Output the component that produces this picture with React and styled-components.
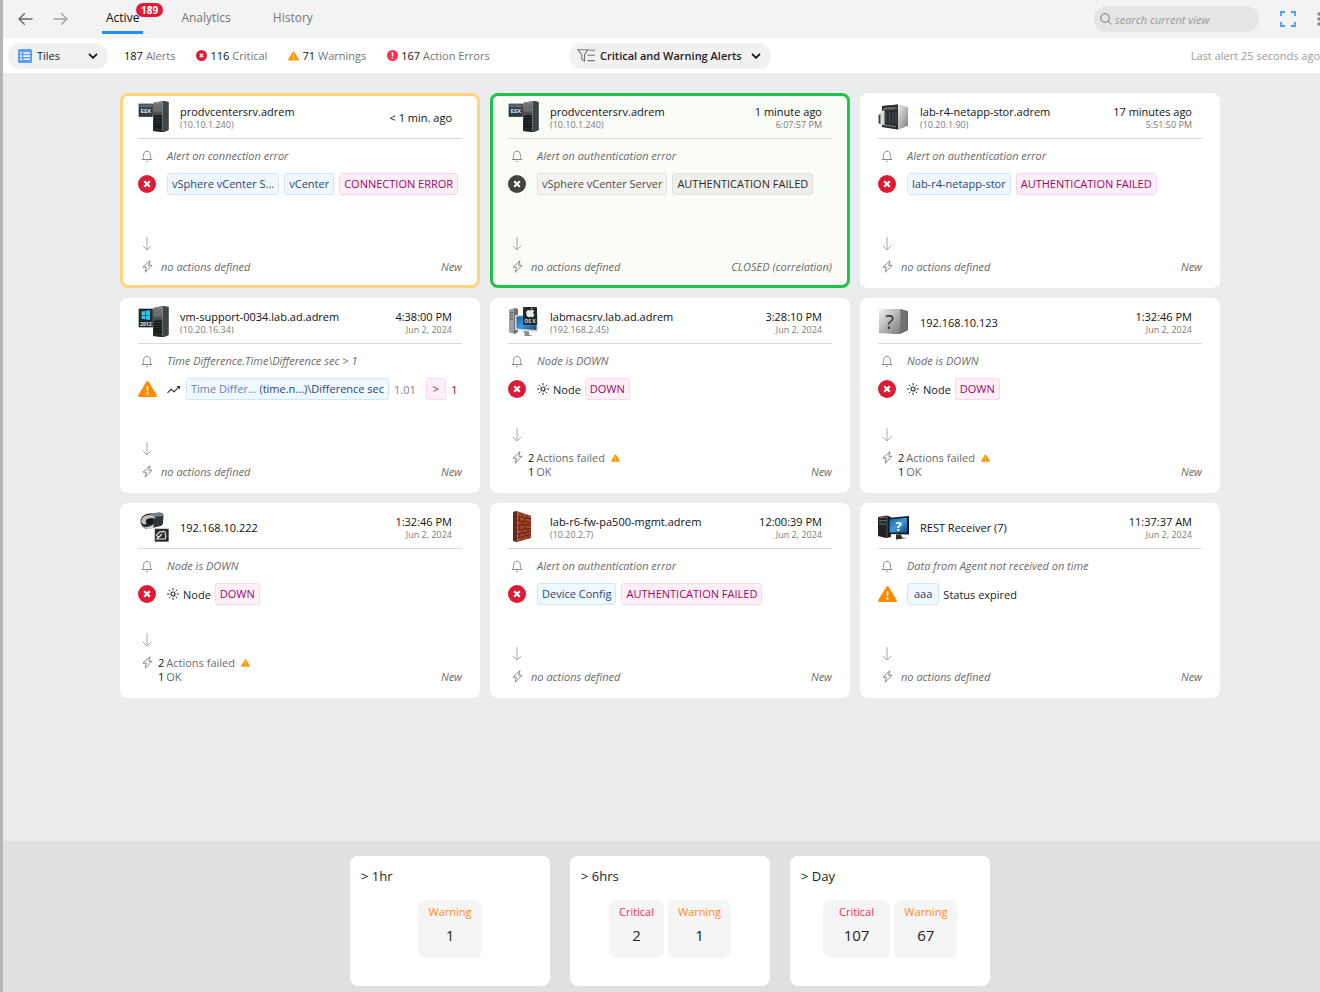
import React from "react";
import styled, { createGlobalStyle } from "styled-components";

const GlobalStyle = createGlobalStyle`
  * {
    box-sizing: border-box;
  }

  body {
    margin: 0;
    overflow: hidden auto;
    background: #ebecee;
    font-family: "Open Sans", "Noto Sans", sans-serif;
    font-size: 11px;
    color: #222;
  }

  button, input, select {
    font: inherit;
    color: inherit;
    border: 0;
    padding: 0;
    margin: 0;
    background: none;
    outline: none;
  }

  svg {
    display: block;
    flex: none;
  }

  h2, h3, p {
    margin: 0;
    font-size: inherit;
    font-weight: inherit;
  }
`;

const esx = { name: "prodvcentersrv.adrem", ip: "(10.10.1.240)", device: "esx" };
const noActions = { failed: 0 };
const failedActions = { failed: 2, ok: 1 };

const alerts = [
  {
    ...esx,
    time: "< 1 min. ago",
    rule: "Alert on connection error",
    level: "critical",
    parts: [
      { chip: "blue", text: "vSphere vCenter S..." },
      { chip: "blue", text: "vCenter" },
      { chip: "pink", text: "CONNECTION ERROR" }
    ],
    actions: noActions,
    status: "New",
    frame: "#ffd37f"
  },
  {
    ...esx,
    time: "1 minute ago",
    date: "6:07:57 PM",
    rule: "Alert on authentication error",
    level: "closed",
    parts: [
      { chip: "gray", text: "vSphere vCenter Server" },
      { chip: "darkgray", text: "AUTHENTICATION FAILED" }
    ],
    actions: noActions,
    status: "CLOSED (correlation)",
    frame: "#1fc24a",
    fill: "#fafcf7"
  },
  {
    name: "lab-r4-netapp-stor.adrem",
    ip: "(10.20.1.90)",
    device: "storage",
    time: "17 minutes ago",
    date: "5:51:50 PM",
    rule: "Alert on authentication error",
    level: "critical",
    parts: [
      { chip: "blue", text: "lab-r4-netapp-stor" },
      { chip: "pink", text: "AUTHENTICATION FAILED" }
    ],
    actions: noActions,
    status: "New"
  },
  {
    name: "vm-support-0034.lab.ad.adrem",
    ip: "(10.20.16.34)",
    device: "windows",
    time: "4:38:00 PM",
    date: "Jun 2, 2024",
    rule: "Time Difference.Time\\Difference sec > 1",
    level: "warning",
    counter: true,
    actions: noActions,
    status: "New"
  },
  {
    name: "labmacsrv.lab.ad.adrem",
    ip: "(192.168.2.45)",
    device: "mac",
    time: "3:28:10 PM",
    date: "Jun 2, 2024",
    rule: "Node is DOWN",
    level: "critical",
    node: true,
    actions: failedActions,
    status: "New"
  },
  {
    name: "192.168.10.123",
    device: "unknown",
    time: "1:32:46 PM",
    date: "Jun 2, 2024",
    rule: "Node is DOWN",
    level: "critical",
    node: true,
    actions: failedActions,
    status: "New"
  },
  {
    name: "192.168.10.222",
    device: "camera",
    time: "1:32:46 PM",
    date: "Jun 2, 2024",
    rule: "Node is DOWN",
    level: "critical",
    node: true,
    actions: failedActions,
    status: "New"
  },
  {
    name: "lab-r6-fw-pa500-mgmt.adrem",
    ip: "(10.20.2.7)",
    device: "firewall",
    time: "12:00:39 PM",
    date: "Jun 2, 2024",
    rule: "Alert on authentication error",
    level: "critical",
    parts: [
      { chip: "blue", text: "Device Config" },
      { chip: "pink", text: "AUTHENTICATION FAILED" }
    ],
    actions: noActions,
    status: "New"
  },
  {
    name: "REST Receiver (7)",
    device: "pc",
    time: "11:37:37 AM",
    date: "Jun 2, 2024",
    rule: "Data from Agent not received on time",
    level: "warning",
    parts: [{ chip: "blue", text: "aaa", roomy: true }, { text: "Status expired" }],
    tight: true,
    actions: noActions,
    status: "New"
  }
];

const periods = [
  { title: "> 1hr", counts: [["Warning", 1]] },
  { title: "> 6hrs", counts: [["Critical", 2], ["Warning", 1]] },
  { title: "> Day", counts: [["Critical", 107], ["Warning", 67]] }
];

const chipColors = {
  blue: ["#f0f8ff", "#cfe7fc", "#2b4672"],
  pink: ["#fff0f8", "#fdd5ee", "#9c0765"],
  gray: ["#f3f4f0", "#e0e1dd", "#4d4d4d"],
  darkgray: ["#eff0ec", "#dfe0dc", "#2b2b2b"]
};

// the view runs under the scrollbar gutter on the right
const Page = styled.div`
  display: flex;
  flex-direction: column;
  width: calc(100% + 17px);
  min-height: 100vh;
  border-left: 3px solid #b5b5b5;
`;

const TopBar = styled.header`
  display: flex;
  align-items: center;
  height: 38px;
  padding: 0 16px 0 15px;
  background: #f3f3f3;
`;

const NavButton = styled.button`
  margin-right: 20px;
  color: ${props => (props.$dim ? "#a5a5a5" : "#6e6e6e")};
`;

const Tabs = styled.nav`
  display: flex;
  align-self: stretch;
  gap: 34px;
  margin-left: 14px;
`;

const Tab = styled.button`
  position: relative;
  height: 34px;
  padding: 4px 4px 0;
  font-size: 12px;
  font-weight: ${props => (props.$active ? 500 : 400)};
  color: ${props => (props.$active ? "#111" : "#757575")};
  border-bottom: 3px solid ${props => (props.$active ? "#1e8fff" : "transparent")};
  border-radius: 1px;
`;

const TabBadge = styled.span`
  position: absolute;
  top: 3px;
  left: 34px;
  padding: 0 5px;
  border-radius: 7px;
  background: #e01b35;
  color: #fff;
  font-size: 10px;
  font-weight: 700;
  line-height: 14px;
`;

const Search = styled.label`
  display: flex;
  align-items: center;
  gap: 3px;
  width: 165px;
  height: 26px;
  margin-left: auto;
  padding: 0 6px;
  border-radius: 13px;
  background: #e5e5e5;

  input {
    flex: 1;
    min-width: 0;
    font-style: italic;
  }

  input::placeholder {
    color: #9a9a9a;
    opacity: 1;
  }
`;

const ToolButton = styled.button`
  margin-left: 21px;
`;

const FilterBar = styled.div`
  display: grid;
  grid-template-columns: 1fr auto 1fr;
  align-items: center;
  height: 35px;
  padding: 0 5px;
  background: #fff;
`;

const Summary = styled.div`
  display: flex;
  align-items: center;
  gap: 21px;
`;

const Pill = styled.label`
  display: flex;
  align-items: center;
  gap: 5px;
  height: 26px;
  padding: 0 10px;
  border-radius: 13px;
  background: #f1f1f1;

  select {
    appearance: none;
  }
`;

const ViewPill = styled(Pill)`
  width: 100px;
  margin-right: -5px;

  select {
    flex: 1;
  }
`;

const FilterPill = styled(Pill)`
  padding: 0 10px 0 8px;

  select {
    margin-right: 4px;
    font-weight: 600;
  }
`;

const Stat = styled.span`
  display: flex;
  align-items: center;
  gap: 3px;
  color: #757575;
  white-space: nowrap;

  b {
    font-weight: 500;
    color: #111;
  }
`;

const LastAlert = styled.span`
  justify-self: end;
  padding-right: 12px;
  color: #9b9b9b;
`;

const Board = styled.main`
  flex: 1;
  display: grid;
  grid-template-columns: repeat(auto-fit, 360px);
  justify-content: center;
  align-content: start;
  gap: 10px;
  padding: 20px 100px;
`;

const Card = styled.article`
  display: flex;
  flex-direction: column;
  min-height: 195px;
  padding: 0 15px 11px;
  border: 3px solid ${props => props.$frame || "#fff"};
  border-radius: 8px;
  background: ${props => props.$fill || "#fff"};
`;

const CardHeader = styled.header`
  display: flex;
  align-items: center;
  gap: 11px;
  height: 43px;
  padding-right: 10px;
  border-bottom: 1px solid #d9d9d9;
`;

const Lines = styled.div`
  flex: ${props => (props.$end ? "none" : 1)};
  text-align: ${props => (props.$end ? "right" : "left")};
`;

const Title = styled.h2`
  font-size: 11px;
  font-weight: 500;
  line-height: 15px;
  color: #111;
`;

const Subtitle = styled.p`
  font-size: 9px;
  line-height: 12px;
  color: #7a7a7a;
`;

const Row = styled.div`
  display: grid;
  grid-template-columns: 18px 1fr;
  column-gap: 11px;
  align-items: center;
  justify-items: center;
  margin-top: 9px;
`;

const Rule = styled.p`
  justify-self: start;
  line-height: 16px;
  font-style: italic;
  color: #6b6b6b;
`;

const Condition = styled.div`
  justify-self: start;
  display: flex;
  align-items: center;
  gap: ${props => (props.$tight ? 4 : 5)}px;
  white-space: nowrap;
`;

const Chip = styled.span`
  height: 22px;
  padding: 0 ${props => (props.$roomy ? 6 : 4)}px;
  border: 1px solid ${props => chipColors[props.$tone][1]};
  border-radius: 3px;
  background: ${props => chipColors[props.$tone][0]};
  color: ${props => chipColors[props.$tone][2]};
  line-height: 20px;
`;

const Muted = styled.span`
  color: ${props => (props.$blue ? "#5f83b3" : "#808080")};
`;

const Reading = styled(Muted)`
  margin-right: 5px;
`;

const Limit = styled.span`
  color: #7d0a55;
`;

const Footer = styled.footer`
  display: flex;
  align-items: flex-end;
  margin-top: auto;
  line-height: 14px;
  color: #6b6b6b;
`;

const Flow = styled.div`
  display: grid;
  grid-template-columns: 18px auto;
  justify-items: center;
  column-gap: ${props => (props.$failed ? 2 : 5)}px;
  row-gap: 9px;

  > svg {
    grid-column: 1 / 2;
  }

  p {
    grid-column: 2 / 3;
    justify-self: start;
    font-style: ${props => (props.$failed ? "normal" : "italic")};
  }

  b {
    font-weight: 500;
    color: #111;
  }

  span {
    display: flex;
    align-items: center;
    gap: 2px;
  }

  span svg {
    margin-left: 4px;
  }
`;

const Status = styled.span`
  margin-left: auto;
  font-style: italic;
`;

const Periods = styled.footer`
  display: flex;
  justify-content: center;
  gap: 20px;
  padding: 15px 0 6px;
  background: #dfe0e2;
`;

const Period = styled.section`
  width: 200px;
  min-height: 130px;
  padding: 11px;
  border-radius: 8px;
  background: #fff;
`;

const PeriodTitle = styled.h3`
  font-size: 13px;
  font-weight: 500;
  line-height: 18px;
`;

const Counts = styled.div`
  display: flex;
  justify-content: center;
  gap: 4px;
  margin-top: 15px;
`;

const Count = styled.div`
  height: 58px;
  padding: 4px 10px 0;
  border-radius: 8px;
  background: #f5f5f5;
  text-align: center;
  line-height: 16px;
  color: ${props => (props.$critical ? "#f0304c" : "#ff8a1c")};

  strong {
    display: block;
    margin-top: 4px;
    padding: 0 11px;
    font-size: 15px;
    font-weight: 400;
    line-height: 22px;
    color: #222;
  }
`;

function BackArrow() {
  return (
    <svg width="15" height="14" viewBox="0 0 15 14" fill="none" stroke="currentColor" strokeWidth="1.5">
      <path d="M14.5 7H1.2M6.8 1.2L1 7l5.8 5.8" />
    </svg>
  );
}

function ForwardArrow() {
  return (
    <svg width="15" height="14" viewBox="0 0 15 14" fill="none" stroke="currentColor" strokeWidth="1.5">
      <path d="M.5 7h13.3M8.2 1.2L14 7l-5.8 5.8" />
    </svg>
  );
}

function Chevron() {
  return (
    <svg width="10" height="6" viewBox="0 0 10 6" fill="none" stroke="#111" strokeWidth="1.8">
      <path d="M1 .8l4 4 4-4" />
    </svg>
  );
}

function TilesIcon() {
  return (
    <svg width="14" height="14" viewBox="0 0 14 14">
      <rect width="14" height="14" rx="1.5" fill="#5a9cf8" />
      <path d="M2 3.2h2v1.6H2zM5.5 3.2H12v1.6H5.5zM2 6.3h2v1.6H2zM5.5 6.3H12v1.6H5.5zM2 9.4h2V11H2zM5.5 9.4H12V11H5.5z" fill="#fff" />
    </svg>
  );
}

function FilterIcon() {
  return (
    <svg width="18" height="13" viewBox="0 0 18 13" fill="none" stroke="#777" strokeWidth="1.1">
      <path d="M.8.7h10.4L7.5 5.4v6.8L4.7 10V5.4zM12.5 1.2H18M10.5 6.3H18M10.5 11.6H18" />
    </svg>
  );
}

function SearchIcon() {
  return (
    <svg width="12" height="12" viewBox="0 0 12 12" fill="none" stroke="#777">
      <circle cx="5" cy="5" r="4.3" />
      <path d="M8 8l3.6 3.6" />
    </svg>
  );
}

function ExpandIcon() {
  return (
    <svg width="16" height="16" viewBox="0 0 16 16" fill="none" stroke="#4a9bff" strokeWidth="1.8">
      <path d="M1 5V1h4M11 1h4v4M15 11v4h-4M5 15H1v-4" />
    </svg>
  );
}

function DotsIcon() {
  return (
    <svg width="4" height="14" viewBox="0 0 4 14" fill="#888">
      <circle cx="2" cy="2" r="1.7" />
      <circle cx="2" cy="7" r="1.7" />
      <circle cx="2" cy="12" r="1.7" />
    </svg>
  );
}

function CrossIcon({ size, color }) {
  return (
    <svg width={size} height={size} viewBox="0 0 18 18">
      <circle cx="9" cy="9" r="9" fill={color} />
      <path d="M6.2 6.2l5.6 5.6M11.8 6.2l-5.6 5.6" stroke="#fff" strokeWidth="2.2" />
    </svg>
  );
}

function WarningIcon({ size, color = "#ff8a00" }) {
  return (
    <svg width={size} height={size - 1} viewBox="0 0 20 18">
      <path d="M8.6 1.6a1.6 1.6 0 0 1 2.8 0l8.2 13.6a1.4 1.4 0 0 1-1.2 2.2H1.6a1.4 1.4 0 0 1-1.2-2.2z" fill={color} />
      <path d="M9 6h2l-.3 5.400H9.300zM9 12.800h2v2H9z" fill="#fff" />
    </svg>
  );
}

function ErrorIcon() {
  return (
    <svg width="11" height="11" viewBox="0 0 11 11">
      <circle cx="5.5" cy="5.5" r="5.5" fill="#f5334f" />
      <path d="M4.8 2.2h1.4v4.2H4.8zM4.8 7.4h1.4v1.4H4.8z" fill="#fff" />
    </svg>
  );
}

function BellIcon() {
  return (
    <svg width="12" height="12" viewBox="0 0 12 12" fill="none" stroke="#888">
      <path d="M.8 9.5h10.4M1.7 9.3c.8-1 .9-2 .9-4C2.6 2.7 4 1.2 6 1.2s3.4 1.5 3.4 4.1c0 2 .1 3 .9 4" />
      <path d="M5 11c.3.6 1.7.6 2 0" />
    </svg>
  );
}

function DownArrow() {
  return (
    <svg width="10" height="14" viewBox="0 0 10 14" fill="none" stroke="#a9a9a9">
      <path d="M5 0v13M.8 8.8L5 13l4.2-4.2" />
    </svg>
  );
}

function BoltIcon() {
  return (
    <svg width="11" height="13" viewBox="0 0 11 13" fill="none" stroke="#888" strokeLinejoin="round">
      <path d="M8 .7L1 7.2h3.3L3.2 12.2l6.9-6.9H6.7z" />
    </svg>
  );
}

function NodeIcon() {
  return (
    <svg width="12" height="12" viewBox="0 0 12 12" fill="none" stroke="#333">
      <circle cx="6" cy="6" r="2" strokeWidth="1.2" />
      <path d="M6 0v2.3M6 9.7V12M0 6h2.3M9.7 6H12M1.8 1.8l1.5 1.5M8.7 8.7l1.5 1.5M1.8 10.2l1.5-1.5M8.7 3.3l1.5-1.5" />
    </svg>
  );
}

function TrendIcon() {
  return (
    <svg width="14" height="9" viewBox="0 0 14 9" fill="none" stroke="#333" strokeWidth="1.2">
      <path d="M.5 7.8L4 4.3l3 2.5L12.5 1.3" />
      <path d="M9.3.9H13v3.6z" fill="#333" stroke="none" />
    </svg>
  );
}

function Tower() {
  return (
    <g>
      <path d="M15 2L25 0l5.5 1v28L26 31l-11-1z" fill="#2b2f31" />
      <path d="M15 2L25 0v31l-10-1z" fill="url(#tower)" />
      <path d="M25 0l5.5 1v28L25 31z" fill="#3f4547" />
      <path d="M16 4l8-1.3v3L16 7zM16 8l8-1v3l-8 .8z" fill="#6b7275" />
      <path d="M16 15.5l8-.5M16 18l8-.3M16 20.5l8-.1M16 23h8M16 25.5l8 .2" stroke="#0f1213" strokeWidth="1.4" />
      <path d="M24.5 1v29" stroke="#84898b" strokeWidth=".7" />
    </g>
  );
}

function DeviceIcon({ kind }) {
  return (
    <svg width="31" height="32" viewBox="0 0 31 32">
      <defs>
        <linearGradient id="tower" x1="0" y1="0" x2="0" y2="1">
          <stop offset="0" stopColor="#858b8d" />
          <stop offset=".45" stopColor="#43494b" />
          <stop offset="1" stopColor="#1f2324" />
        </linearGradient>
        <linearGradient id="steel" x1="0" y1="0" x2="1" y2="1">
          <stop offset="0" stopColor="#f0f0f0" />
          <stop offset=".5" stopColor="#b4b6b8" />
          <stop offset="1" stopColor="#77797c" />
        </linearGradient>
        <linearGradient id="screen" x1="0" y1="0" x2="1" y2="1">
          <stop offset="0" stopColor="#1c5c9c" />
          <stop offset=".5" stopColor="#3c9ade" />
          <stop offset="1" stopColor="#0f4478" />
        </linearGradient>
      </defs>
      {kind === "esx" && (
        <g>
          <Tower />
          <rect x="1" y="3" width="13.5" height="12.5" fill="#2f3b43" stroke="#15191b" strokeWidth=".6" />
          <path d="M1.300 3.300h13v3h-13z" fill="#5b6971" />
          <text x="7.8" y="11.8" textAnchor="middle" fontSize="6" fontWeight="700" fill="#dfe9ef">ESX</text>
        </g>
      )}
      {kind === "windows" && (
        <g>
          <Tower />
          <rect x="1" y="3" width="13.5" height="18" fill="#23282b" stroke="#111" strokeWidth=".6" />
          <path d="M3.500 5.500l3.700-.6v4H3.500zM7.800 4.800l4.200-.6v4.700H7.800zM3.500 9.500h3.700v3.800l-3.700-.6zM7.800 9.500H12V14l-4.200-.6z" fill="#2fc6ee" />
          <text x="7.8" y="19.6" textAnchor="middle" fontSize="5" fontWeight="700" fill="#eee">2012</text>
        </g>
      )}
      {kind === "storage" && (
        <g>
          <path d="M4 5l16-1.500 10 3v18l-10 4L4 26z" fill="#8b8e91" />
          <path d="M20 3.500l10 3v18l-10 4z" fill="url(#steel)" />
          <path d="M4 5l16-1.500v25L4 26z" fill="#2a2d2f" />
          <path d="M5 6.500l14-1v3.200l-14 .8z" fill="#4a4e51" />
          <path d="M7 7.500l10-.6" stroke="#8a8e91" strokeDasharray="2 1" />
          <path d="M8 11.500v10M11.500 11.500v10.500M15 11.300v11M18 11.200v11.500" stroke="#505457" />
          <path d="M6 24l12 1.600" stroke="#83878a" />
          <path d="M2.500 10.500l4-1.500v15l-4-.5z" fill="#d9dbdc" />
          <path d="M.5 14v8.500l2 .5V13z" fill="#444" />
        </g>
      )}
      {kind === "mac" && (
        <g>
          <path d="M1 4l6-2 3 1v23l-3 2-6-2z" fill="#6c7073" />
          <path d="M1 4l5-1v24l-5-1z" fill="#9da1a4" />
          <path d="M2 7l3-.4M2 10l3-.3M2 13l3-.2" stroke="#4b4f52" />
          <path d="M7 9l23-1v18L7 24z" fill="#d5d8da" />
          <path d="M8.500 10.500l20-1V24l-20-1.500z" fill="url(#screen)" />
          <path d="M15 25l6 .5v3l4 1.500h-9l1-2z" fill="#8a8e91" />
          <rect x="15" y="1" width="14" height="18" rx="1" fill="#25282a" />
          <path d="M22.800 3.500c0-1 .8-1.700 1.600-1.700 0 1-.7 1.700-1.600 1.700zM22 4.300c.8 0 1.500-.5 2.500-.4.700 0 1.300.4 1.700 1-1.500 1-1.200 3.200.3 3.900-.5 1.400-1.300 2.400-2.200 2.400-.7 0-1-.4-1.800-.4s-1.100.4-1.800.4c-1.500 0-3-3-2.400-5.200.4-1.200 1.400-2 2.400-2 .5 0 1 .3 1.300.3z" fill="#e9e9e9" />
          <text x="22" y="17.3" textAnchor="middle" fontSize="5" fontWeight="700" fill="#ddd">OS X</text>
        </g>
      )}
      {kind === "unknown" && (
        <g>
          <path d="M1 4l20-1 9 2v19l-8 4-21-1z" fill="#85888b" />
          <path d="M22 3l8 2.500V24l-8 4z" fill="#5f6366" />
          <path d="M24 4.500V26M26 5v20M28 5.500V24" stroke="#8c9093" strokeWidth=".7" />
          <path d="M1 4.500Q1 3.500 2 3.500l19-.5q1.500 0 1.500 1v23q0 1-1 1L2 26.500q-1 0-1-1z" fill="url(#steel)" />
          <text x="11.5" y="23" textAnchor="middle" fontSize="20" fontWeight="500" fill="#2f3133">?</text>
        </g>
      )}
      {kind === "camera" && (
        <g>
          <path d="M8 3l13-1.500q4 0 4.500 3l-.5 8q-1 3-5 3l-8 2z" fill="#2f363d" />
          <path d="M11 2.500L22 2q3 .6 3 3L14 6z" fill="#7c868e" />
          <ellipse cx="10" cy="10.500" rx="7.500" ry="7.500" fill="#2a2f33" />
          <path d="M3 11q1-7 8-7 6 0 6.500 4-4-2-7 0-3 2-2 5-4 1-5.500-2z" fill="#b9bfc3" />
          <ellipse cx="11.500" cy="10.500" rx="3.600" ry="3" fill="#15181a" />
          <path d="M4 14q5 5 12-1l-1 4q-6 3-11-3z" fill="#d8dcde" />
          <rect x="17" y="18" width="13.5" height="12.5" fill="#26292b" stroke="#555" strokeWidth=".6" />
          <path d="M19 25q-1-2 1.500-2.500Q21 20 24 21q3-1.500 3.500 1-1 1 .5 3l-1 3h-8l1.500-2.500zM19 28l5-5" fill="none" stroke="#e4e4e4" strokeWidth="1.2" />
        </g>
      )}
      {kind === "firewall" && (
        <g transform="translate(2 0)">
          <path d="M3 1l3-1 15 5v22L6 31l-3-1z" fill="#6b2b1b" />
          <path d="M7 .3L21 5v21.500L7 31z" fill="#a9472c" />
          <path d="M7 5l14 3M7 9.500l14 2M7 14h14M7 18.500l14-1M7 23l14-2.500M7 27l14-3.500M3 5.500L7 5M3 10l4-.5M3 14.500l4-.5M3 19l4-.5M3 23.500l4-.5M3 27.500l4-.5" stroke="#4a1a10" strokeWidth=".8" />
          <path d="M12 2v4M17 3.700v3.600M9.500 5.700v4M15 6.800v3.600M12 10.500V14M18 11.200V14M9.500 14v4.300M15 14v4M12 18.200v4M18 17.800v3.400M9.500 22.500v4M15 21.600v3.600M12 26v3.300M18 24.500v3.300" stroke="#4a1a10" strokeWidth=".7" />
          <path d="M7.500 1v29" stroke="#d07a5c" strokeWidth=".6" />
        </g>
      )}
      {kind === "pc" && (
        <g>
          <path d="M0 6l9-1.500L13 6v20l-5 1-8-2z" fill="#1e2224" />
          <path d="M1 7l8-1M1 10l8-.6M1 13h7" stroke="#6d7478" />
          <path d="M9 5v21" stroke="#4a5053" />
          <path d="M10 7l21-2v18.500L10 23z" fill="#15181a" />
          <path d="M11.500 8.300l17.500-1.500v15L11.500 21.500z" fill="url(#screen)" />
          <path d="M18 23.500h5l1 3 5 .5-11 1.500z" fill="#2b2f31" />
          <text x="20.5" y="19.5" textAnchor="middle" fontSize="13" fontWeight="700" fill="#fff">?</text>
        </g>
      )}
    </svg>
  );
}

function LevelIcon({ level }) {
  switch (level) {
    case "warning":
      return <WarningIcon size={19} />;
    case "closed":
      return <CrossIcon size={18} color="#42443f" />;
    default:
      return <CrossIcon size={18} color="#dd1b34" />;
  }
}

function AlertCondition({ alert }) {
  if (alert.node) {
    return (
      <Condition $tight>
        <NodeIcon />
        <span>Node</span>
        <Chip $tone="pink">DOWN</Chip>
      </Condition>
    );
  }

  if (alert.counter) {
    return (
      <Condition>
        <TrendIcon />
        <Chip $tone="blue">
          <Muted $blue>Time Differ...</Muted> (time.n...)\Difference sec
        </Chip>
        <Reading>1.01</Reading>
        <Chip $tone="pink" $roomy>&gt;</Chip>
        <Limit>1</Limit>
      </Condition>
    );
  }

  return (
    <Condition $tight={alert.tight}>
      {alert.parts.map(part =>
        part.chip ? (
          <Chip key={part.text} $tone={part.chip} $roomy={part.roomy}>{part.text}</Chip>
        ) : (
          <span key={part.text}>{part.text}</span>
        )
      )}
    </Condition>
  );
}

function AlertCard({ alert }) {
  const { failed, ok } = alert.actions;

  return (
    <Card $frame={alert.frame} $fill={alert.fill}>
      <CardHeader>
        <DeviceIcon kind={alert.device} />
        <Lines>
          <Title>{alert.name}</Title>
          {alert.ip && <Subtitle>{alert.ip}</Subtitle>}
        </Lines>
        <Lines $end>
          <Title as="p">{alert.time}</Title>
          {alert.date && <Subtitle>{alert.date}</Subtitle>}
        </Lines>
      </CardHeader>
      <Row>
        <BellIcon />
        <Rule>{alert.rule}</Rule>
      </Row>
      <Row>
        <LevelIcon level={alert.level} />
        <AlertCondition alert={alert} />
      </Row>
      <Footer>
        <Flow $failed={failed > 0}>
          <DownArrow />
          <BoltIcon />
          {failed > 0 ? (
            <p>
              <span>
                <b>{failed}</b> Actions failed <WarningIcon size={9} color="#ff9800" />
              </span>
              <span>
                <b>{ok}</b> OK
              </span>
            </p>
          ) : (
            <p>no actions defined</p>
          )}
        </Flow>
        <Status>{alert.status}</Status>
      </Footer>
    </Card>
  );
}

function App() {
  return (
    <Page>
      <GlobalStyle />
      <TopBar>
        <NavButton aria-label="Back"><BackArrow /></NavButton>
        <NavButton aria-label="Forward" $dim><ForwardArrow /></NavButton>
        <Tabs>
          <Tab $active>
            Active
            <TabBadge>189</TabBadge>
          </Tab>
          <Tab>Analytics</Tab>
          <Tab>History</Tab>
        </Tabs>
        <Search>
          <SearchIcon />
          <input type="search" aria-label="Search" placeholder="search current view" />
        </Search>
        <ToolButton aria-label="Full screen"><ExpandIcon /></ToolButton>
        <ToolButton aria-label="More"><DotsIcon /></ToolButton>
      </TopBar>
      <FilterBar>
        <Summary>
          <ViewPill>
            <TilesIcon />
            <select aria-label="View">
              <option>Tiles</option>
            </select>
            <Chevron />
          </ViewPill>
          <Stat><b>187</b> Alerts</Stat>
          <Stat><CrossIcon size={11} color="#dd1b34" /><b>116</b> Critical</Stat>
          <Stat><WarningIcon size={11} color="#ff9800" /><b>71</b> Warnings</Stat>
          <Stat><ErrorIcon /><b>167</b> Action Errors</Stat>
        </Summary>
        <FilterPill>
          <FilterIcon />
          <select aria-label="Filter">
            <option>Critical and Warning Alerts</option>
          </select>
          <Chevron />
        </FilterPill>
        <LastAlert>Last alert 25 seconds ago</LastAlert>
      </FilterBar>
      <Board>
        {alerts.map((alert, key) => (
          <AlertCard key={key} alert={alert} />
        ))}
      </Board>
      <Periods>
        {periods.map(period => (
          <Period key={period.title}>
            <PeriodTitle>{period.title}</PeriodTitle>
            <Counts>
              {period.counts.map(([label, value]) => (
                <Count key={label} $critical={label === "Critical"}>
                  {label}
                  <strong>{value}</strong>
                </Count>
              ))}
            </Counts>
          </Period>
        ))}
      </Periods>
    </Page>
  );
}

export default App;
